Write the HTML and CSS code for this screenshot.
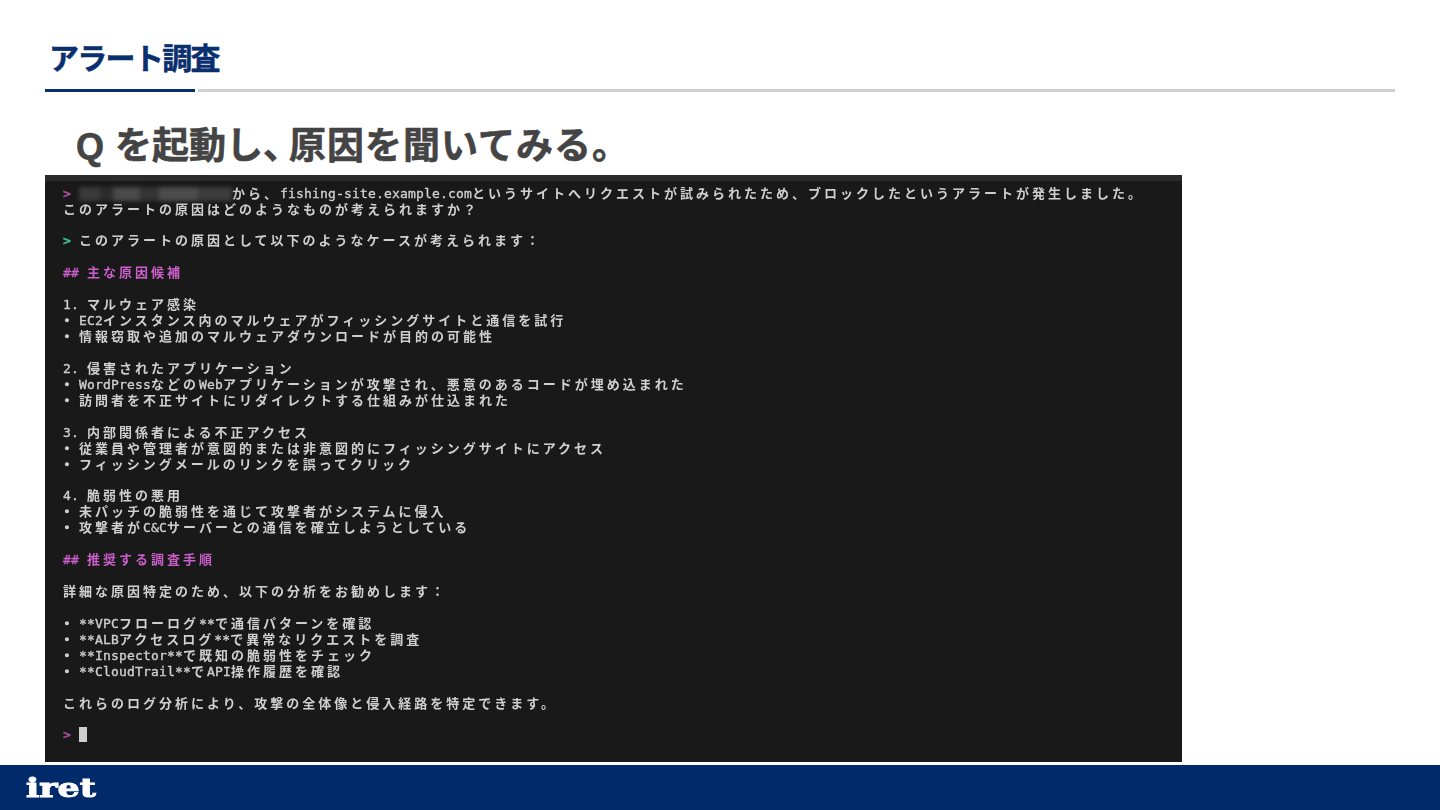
FILE: index.html
```html
<!DOCTYPE html>
<html lang="ja">
<head>
<meta charset="utf-8">
<title>アラート調査</title>
<link rel="stylesheet" href="styles.css">
</head>
<body>
<main class="slide">
  <header class="head">
    <h1 class="title">アラート調査</h1>
    <div class="rule"><span class="rule-blue"></span><span class="rule-gray"></span></div>
  </header>
  <h2 class="lead"><span class="q">Q </span>を起動し<span class="comma">、</span><span class="wide">原因を聞いてみる。</span></h2>
  <section class="term">
    <div class="bar"></div>
    <div class="lines">
      <div class="l"><span class="a mag">&gt; </span><span class="redact"></span>から、<span class="a">fishing-site.example.com</span>というサイトへリクエストが試みられたため、ブロックしたというアラートが発生しました。</div>
      <div class="l">このアラートの原因はどのようなものが考えられますか？</div>
      <div class="l"></div>
      <div class="l"><span class="a grn">&gt; </span>このアラートの原因として以下のようなケースが考えられます：</div>
      <div class="l"></div>
      <div class="l pink"><span class="a">## </span>主な原因候補</div>
      <div class="l"></div>
      <div class="l"><span class="a">1. </span>マルウェア感染</div>
      <div class="l"><span class="a">• EC2</span>インスタンス内のマルウェアがフィッシングサイトと通信を試行</div>
      <div class="l"><span class="a">• </span>情報窃取や追加のマルウェアダウンロードが目的の可能性</div>
      <div class="l"></div>
      <div class="l"><span class="a">2. </span>侵害されたアプリケーション</div>
      <div class="l"><span class="a">• WordPress</span>などの<span class="a">Web</span>アプリケーションが攻撃され、悪意のあるコードが埋め込まれた</div>
      <div class="l"><span class="a">• </span>訪問者を不正サイトにリダイレクトする仕組みが仕込まれた</div>
      <div class="l"></div>
      <div class="l"><span class="a">3. </span>内部関係者による不正アクセス</div>
      <div class="l"><span class="a">• </span>従業員や管理者が意図的または非意図的にフィッシングサイトにアクセス</div>
      <div class="l"><span class="a">• </span>フィッシングメールのリンクを誤ってクリック</div>
      <div class="l"></div>
      <div class="l"><span class="a">4. </span>脆弱性の悪用</div>
      <div class="l"><span class="a">• </span>未パッチの脆弱性を通じて攻撃者がシステムに侵入</div>
      <div class="l"><span class="a">• </span>攻撃者が<span class="a">C&amp;C</span>サーバーとの通信を確立しようとしている</div>
      <div class="l"></div>
      <div class="l pink"><span class="a">## </span>推奨する調査手順</div>
      <div class="l"></div>
      <div class="l">詳細な原因特定のため、以下の分析をお勧めします：</div>
      <div class="l"></div>
      <div class="l"><span class="a">• **VPC</span>フローログ<span class="a">**</span>で通信パターンを確認</div>
      <div class="l"><span class="a">• **ALB</span>アクセスログ<span class="a">**</span>で異常なリクエストを調査</div>
      <div class="l"><span class="a">• **Inspector**</span>で既知の脆弱性をチェック</div>
      <div class="l"><span class="a">• **CloudTrail**</span>で<span class="a">API</span>操作履歴を確認</div>
      <div class="l"></div>
      <div class="l">これらのログ分析により、攻撃の全体像と侵入経路を特定できます。</div>
      <div class="l"></div>
      <div class="l"><span class="a mag">&gt; </span><span class="cursor"></span></div>
    </div>
  </section>
  <footer class="foot"><span class="logo">iret</span></footer>
</main>
</body>
</html>
```
FILE: styles.css
```css
* { box-sizing: border-box; margin: 0; padding: 0; }
html, body { width: 1440px; height: 810px; overflow: hidden; background: #fff; }
.slide { display: flex; flex-direction: column; width: 1440px; height: 810px; }

.head { display: flex; flex-direction: column; height: 92px; padding: 36px 45px 0; }
.title {
  height: 53px; padding-left: 4px;
  font: 700 30px/40px "Noto Sans CJK JP", sans-serif;
  letter-spacing: -1.7px; color: #0a2f6e;
  -webkit-text-stroke: .5px #0a2f6e;
}
.rule { display: flex; gap: 3px; height: 3px; }
.rule-blue { width: 150px; background: #0a2f6e; }
.rule-gray { flex: 1; background: #d0d0d2; }

.lead {
  height: 83px; padding: 28px 0 0 76px;
  font: 700 37px/46px "Noto Sans CJK JP", sans-serif;
  color: #444; white-space: pre;
  -webkit-text-stroke: .6px #444;
}
.q { font: 700 36px/46px "Liberation Sans", sans-serif; letter-spacing: .5px; }
.comma { letter-spacing: -11px; }
.wide { letter-spacing: 1px; }

.term {
  display: flex; flex-direction: column;
  width: 1137px; height: 587px; margin-left: 45px;
  background: #191919; color: #cfcfcf; overflow: hidden;
}
.bar { height: 6px; background: #2b2b2b; flex: none; }
.lines { padding: 3.6px 0 0 18px; filter: blur(.45px); }
.l {
  height: 15.94px; white-space: pre;
  font: 700 13px/16px "Noto Sans CJK JP", sans-serif;
  letter-spacing: 3px;
}
.a {
  font-family: "DejaVu Sans Mono", monospace; font-weight: 400; letter-spacing: .17px;
  -webkit-text-stroke: .35px currentColor;
}
.pink { color: #cc5fcc; }
.mag { color: #a84ea0; font-weight: 700; }
.grn { color: #3fbf9f; font-weight: 700; }
.redact {
  display: inline-block; width: 153px; height: 14px; vertical-align: -3px;
  background: linear-gradient(90deg, #3a3a3a 0 14%, #2b2b2b 14% 22%, #4a4a4a 22% 40%, #343434 40% 52%, #4c4c4c 52% 78%, #3c3c3c 78% 100%);
  filter: blur(2px);
}
.cursor { display: inline-block; width: 8px; height: 15px; vertical-align: -3px; background: #cfcfcf; }

.foot {
  display: flex; align-items: center;
  height: 45px; margin-top: 3px; padding: 0 0 0 26px;
  background: #012a6b;
}
.logo {
  font: 900 26px/1 "DejaVu Serif", serif;
  letter-spacing: 0; color: #fff;
  -webkit-text-stroke: 1px #fff;
  transform: scaleX(1.34); transform-origin: left center;
}
```
